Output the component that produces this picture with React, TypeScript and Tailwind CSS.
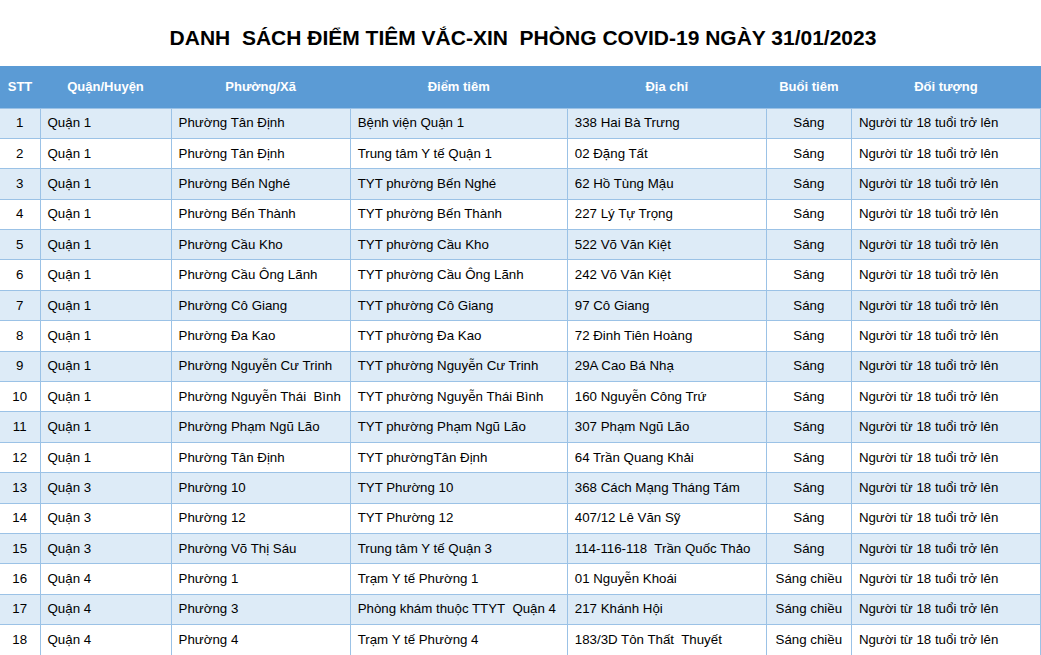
import React from "react";

const rows: string[][] = [
  ["1", "Quận 1", "Phường Tân Định", "Bệnh viện Quận 1", "338 Hai Bà Trưng", "Sáng", "Người từ 18 tuổi trở lên"],
  ["2", "Quận 1", "Phường Tân Định", "Trung tâm Y tế Quận 1", "02 Đặng Tất", "Sáng", "Người từ 18 tuổi trở lên"],
  ["3", "Quận 1", "Phường Bến Nghé", "TYT phường Bến Nghé", "62 Hồ Tùng Mậu", "Sáng", "Người từ 18 tuổi trở lên"],
  ["4", "Quận 1", "Phường Bến Thành", "TYT phường Bến Thành", "227 Lý Tự Trọng", "Sáng", "Người từ 18 tuổi trở lên"],
  ["5", "Quận 1", "Phường Cầu Kho", "TYT phường Cầu Kho", "522 Võ Văn Kiệt", "Sáng", "Người từ 18 tuổi trở lên"],
  ["6", "Quận 1", "Phường Cầu Ông Lãnh", "TYT phường Cầu Ông Lãnh", "242 Võ Văn Kiệt", "Sáng", "Người từ 18 tuổi trở lên"],
  ["7", "Quận 1", "Phường Cô Giang", "TYT phường Cô Giang", "97 Cô Giang", "Sáng", "Người từ 18 tuổi trở lên"],
  ["8", "Quận 1", "Phường Đa Kao", "TYT phường Đa Kao", "72 Đinh Tiên Hoàng", "Sáng", "Người từ 18 tuổi trở lên"],
  ["9", "Quận 1", "Phường Nguyễn Cư Trinh", "TYT phường Nguyễn Cư Trinh", "29A Cao Bá Nhạ", "Sáng", "Người từ 18 tuổi trở lên"],
  ["10", "Quận 1", "Phường Nguyễn Thái  Bình", "TYT phường Nguyễn Thái Bình", "160 Nguyễn Công Trứ", "Sáng", "Người từ 18 tuổi trở lên"],
  ["11", "Quận 1", "Phường Phạm Ngũ Lão", "TYT phường Phạm Ngũ Lão", "307 Phạm Ngũ Lão", "Sáng", "Người từ 18 tuổi trở lên"],
  ["12", "Quận 1", "Phường Tân Định", "TYT phườngTân Định", "64 Trần Quang Khải", "Sáng", "Người từ 18 tuổi trở lên"],
  ["13", "Quận 3", "Phường 10", "TYT Phường 10", "368 Cách Mạng Tháng Tám", "Sáng", "Người từ 18 tuổi trở lên"],
  ["14", "Quận 3", "Phường 12", "TYT Phường 12", "407/12 Lê Văn Sỹ", "Sáng", "Người từ 18 tuổi trở lên"],
  ["15", "Quận 3", "Phường Võ Thị Sáu", "Trung tâm Y tế Quận 3", "114-116-118  Trần Quốc Thảo", "Sáng", "Người từ 18 tuổi trở lên"],
  ["16", "Quận 4", "Phường 1", "Trạm Y tế Phường 1", "01 Nguyễn Khoái", "Sáng chiều", "Người từ 18 tuổi trở lên"],
  ["17", "Quận 4", "Phường 3", "Phòng khám thuộc TTYT  Quận 4", "217 Khánh Hội", "Sáng chiều", "Người từ 18 tuổi trở lên"],
  ["18", "Quận 4", "Phường 4", "Trạm Y tế Phường 4", "183/3D Tôn Thất  Thuyết", "Sáng chiều", "Người từ 18 tuổi trở lên"],
];

const headers = ["STT", "Quận/Huyện", "Phường/Xã", "Điểm tiêm", "Địa chỉ", "Buổi tiêm", "Đối tượng"];
const widths = ["w-[40px]", "w-[131px]", "w-[179px]", "w-[217px]", "w-[199px]", "w-[85px]", "w-[189px]"];

export default function App() {
  return (
    <div
      className="w-[1041px] h-[655px] overflow-hidden bg-white text-black"
      style={{ fontFamily: '"Liberation Sans", Arial, sans-serif' }}
    >
      <div className="h-[66px] flex items-center justify-center pt-[10px] pl-[5px]">
        <h1 className="text-[21px] font-bold whitespace-pre">
          DANH  SÁCH ĐIỂM TIÊM VẮC-XIN  PHÒNG COVID-19 NGÀY 31/01/2023
        </h1>
      </div>
      <table className="border-collapse table-fixed w-[1041px]">
        <colgroup>
          {widths.map((w, i) => (
            <col key={i} className={w} />
          ))}
        </colgroup>
        <thead>
          <tr className="h-[42px] bg-[#5b9bd5]">
            {headers.map((h, i) => (
              <th key={i} className="text-white font-bold text-[13px] text-center p-0">
                {h}
              </th>
            ))}
          </tr>
        </thead>
        <tbody>
          {rows.map((r, ri) => (
            <tr key={ri} className={`h-[30.4px] ${ri % 2 === 0 ? "bg-[#ddebf7]" : "bg-white"}`}>
              {r.map((c, ci) => (
                <td
                  key={ci}
                  className={`border border-[#9bc2e6] text-[13.3px] p-0 whitespace-pre ${
                    ci === 0 || ci === 5 ? "text-center" : "text-left pl-[7px]"
                  } ${ci === 0 ? "border-l-0" : ""}`}
                >
                  {c}
                </td>
              ))}
            </tr>
          ))}
        </tbody>
      </table>
    </div>
  );
}
